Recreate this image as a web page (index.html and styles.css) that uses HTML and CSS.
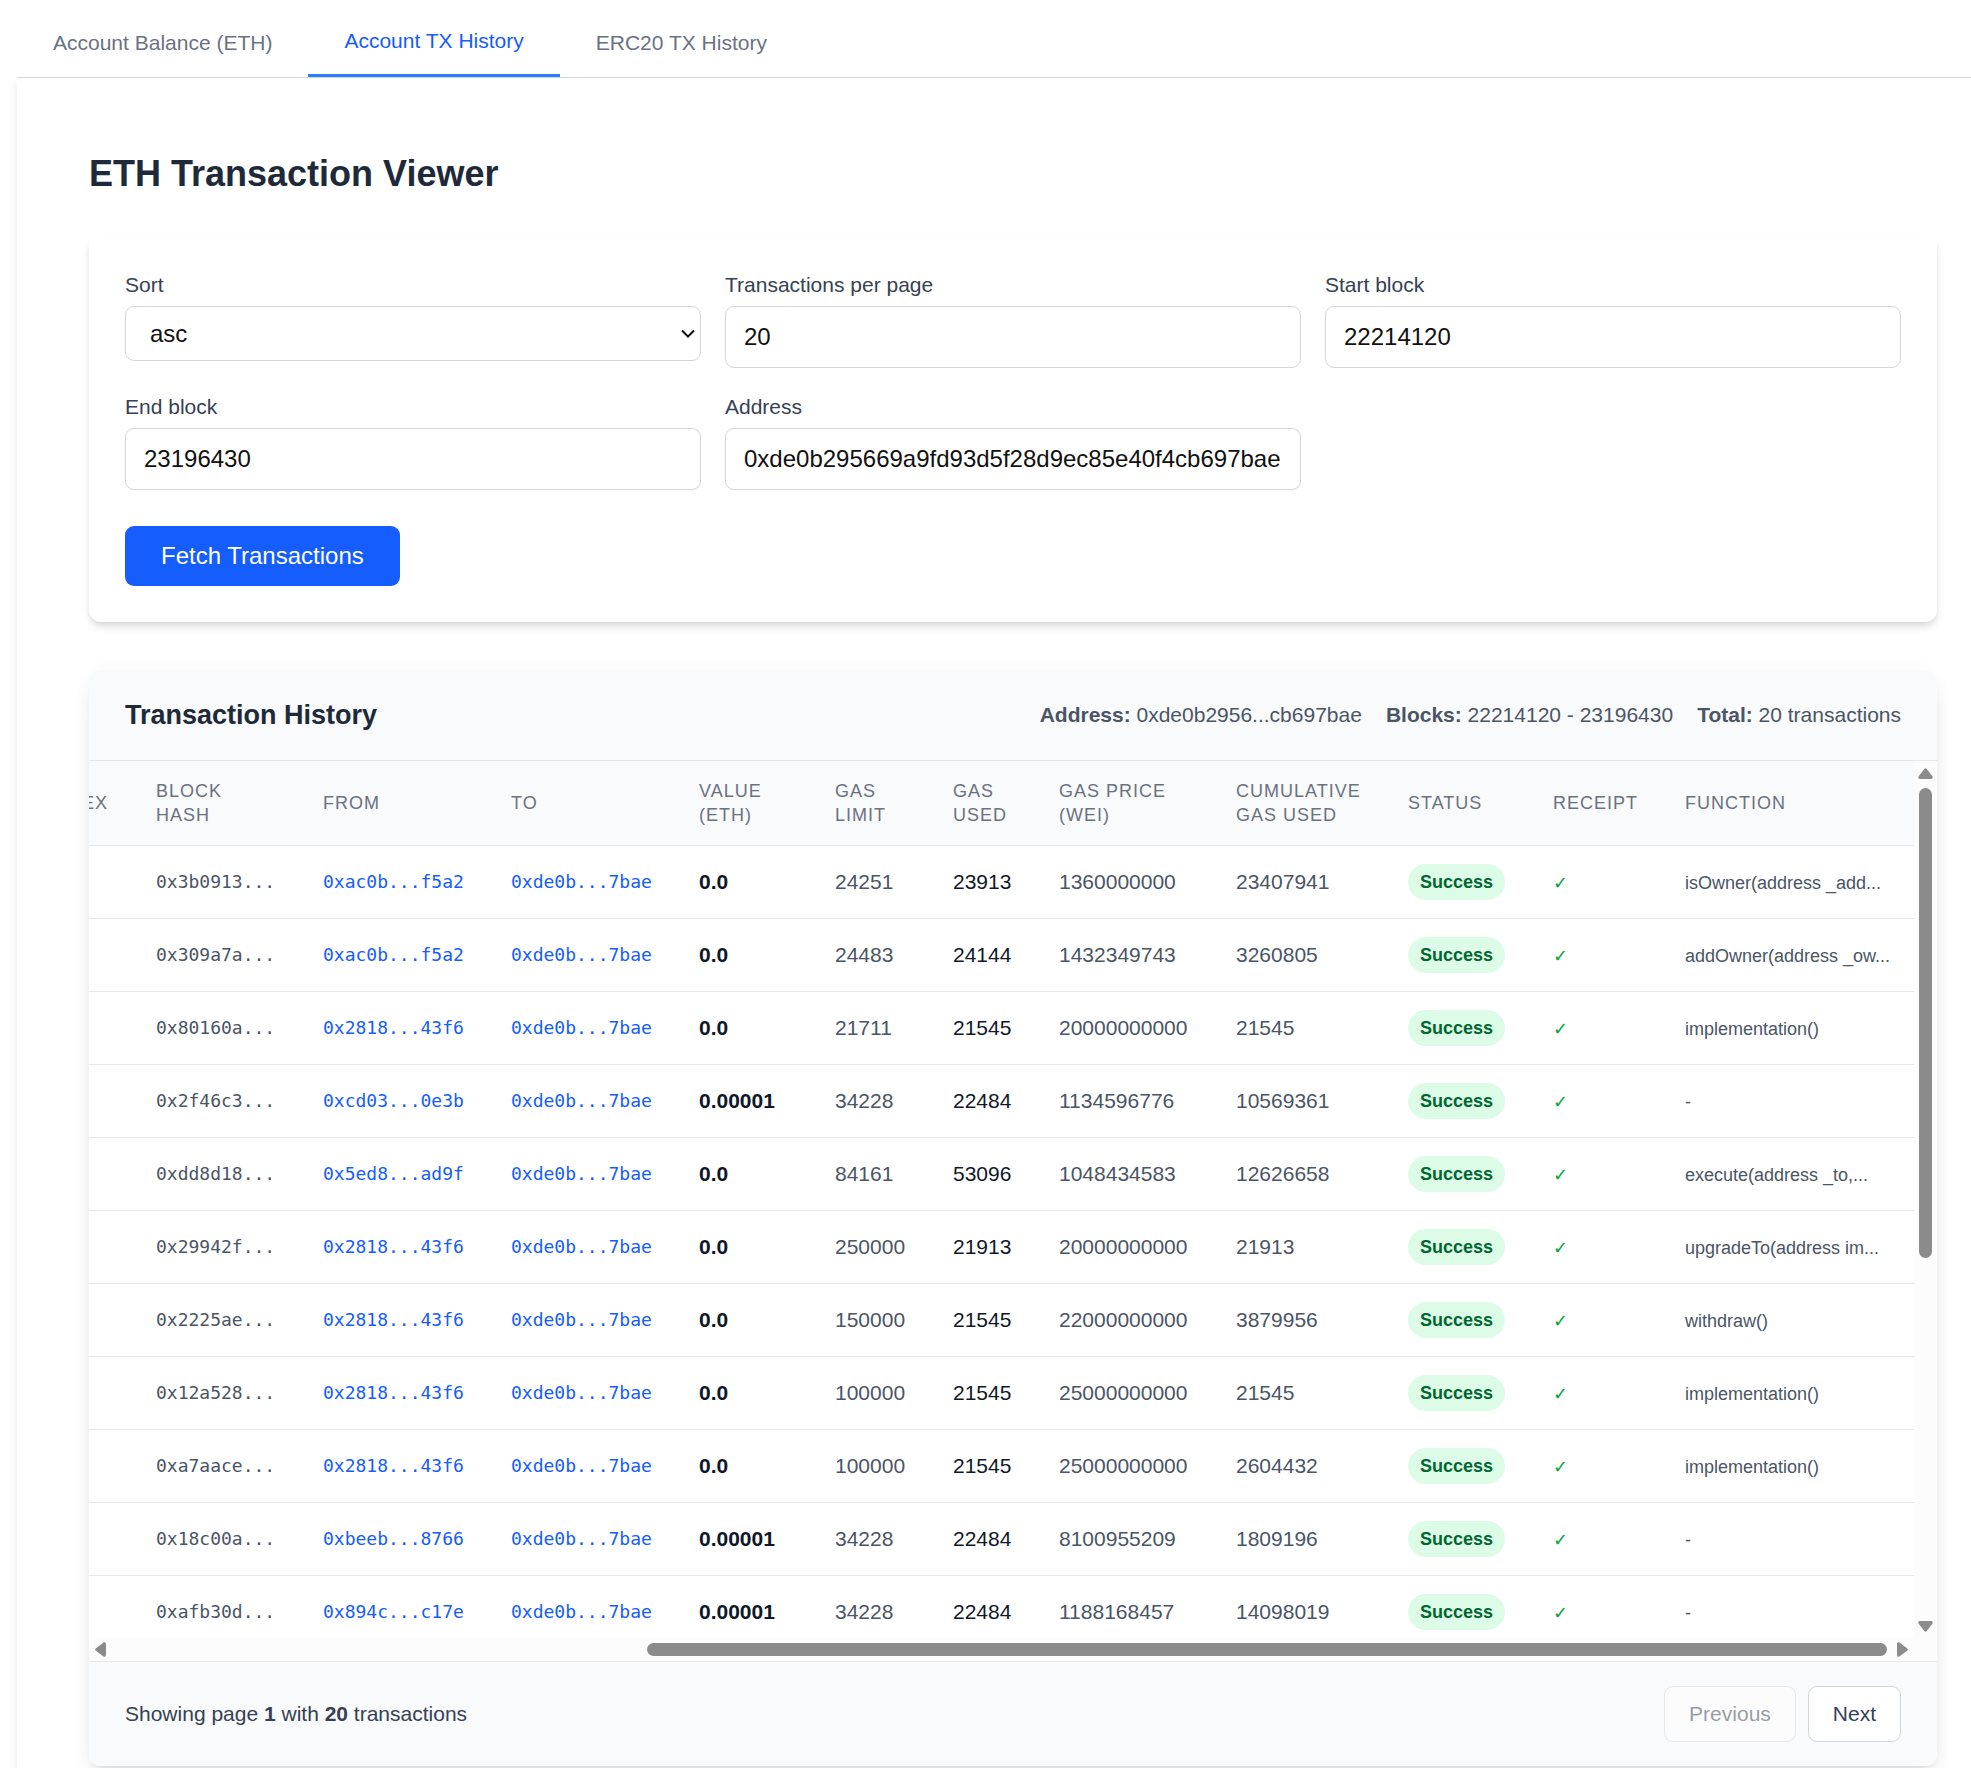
FILE: index.html
```html
<!DOCTYPE html>
<html lang="en">
<head>
<meta charset="utf-8">
<title>ETH Transaction Viewer</title>
<link rel="stylesheet" href="styles.css">
</head>
<body>
<nav class="tabs">
  <button type="button" class="tab">Account Balance (ETH)</button>
  <button type="button" class="tab tab-active">Account TX History</button>
  <button type="button" class="tab">ERC20 TX History</button>
</nav>
<main class="panel">
  <h1 class="page-title">ETH Transaction Viewer</h1>

  <form class="card filters">
    <div class="fields">
      <div class="field">
        <label for="sort">Sort</label>
        <div class="select-wrap">
          <select id="sort" class="control select"><option>asc</option><option>desc</option></select>
          <svg class="chevron" viewBox="0 0 14 10" aria-hidden="true"><path d="M1 1.5 7 7.5 13 1.5"/></svg>
        </div>
      </div>
      <div class="field">
        <label for="per-page">Transactions per page</label>
        <input id="per-page" class="control" type="text" value="20">
      </div>
      <div class="field">
        <label for="start">Start block</label>
        <input id="start" class="control" type="text" value="22214120">
      </div>
      <div class="field">
        <label for="end">End block</label>
        <input id="end" class="control" type="text" value="23196430">
      </div>
      <div class="field">
        <label for="address">Address</label>
        <input id="address" class="control" type="text" value="0xde0b295669a9fd93d5f28d9ec85e40f4cb697bae">
      </div>
    </div>
    <button type="button" class="fetch">Fetch Transactions</button>
  </form>

  <section class="card history">
    <header class="history-head">
      <h2 class="history-title">Transaction History</h2>
      <div class="meta">
        <span><strong>Address:</strong> 0xde0b2956...cb697bae</span>
        <span><strong>Blocks:</strong> 22214120 - 23196430</span>
        <span><strong>Total:</strong> 20 transactions</span>
      </div>
    </header>

    <div class="scroller">
      <div class="viewport">
        <table class="tx">
          <colgroup>
            <col class="c-index"><col class="c-hash"><col class="c-addr"><col class="c-addr"><col class="c-value"><col class="c-limit"><col class="c-used"><col class="c-price"><col class="c-cumulative"><col class="c-status"><col class="c-receipt"><col class="c-function">
          </colgroup>
          <thead>
            <tr><th>Index</th><th>Block Hash</th><th>From</th><th>To</th><th>Value (ETH)</th><th>Gas Limit</th><th>Gas Used</th><th>Gas Price (Wei)</th><th>Cumulative Gas Used</th><th>Status</th><th>Receipt</th><th>Function</th></tr>
          </thead>
          <tbody>
            <tr><td></td><td class="mono">0x3b0913...</td><td class="mono"><a href="#">0xac0b...f5a2</a></td><td class="mono"><a href="#">0xde0b...7bae</a></td><td class="value">0.0</td><td>24251</td><td class="used">23913</td><td>1360000000</td><td>23407941</td><td><span class="badge">Success</span></td><td class="check">✓</td><td class="fn">isOwner(address _add...</td></tr>
            <tr><td></td><td class="mono">0x309a7a...</td><td class="mono"><a href="#">0xac0b...f5a2</a></td><td class="mono"><a href="#">0xde0b...7bae</a></td><td class="value">0.0</td><td>24483</td><td class="used">24144</td><td>1432349743</td><td>3260805</td><td><span class="badge">Success</span></td><td class="check">✓</td><td class="fn">addOwner(address _ow...</td></tr>
            <tr><td></td><td class="mono">0x80160a...</td><td class="mono"><a href="#">0x2818...43f6</a></td><td class="mono"><a href="#">0xde0b...7bae</a></td><td class="value">0.0</td><td>21711</td><td class="used">21545</td><td>20000000000</td><td>21545</td><td><span class="badge">Success</span></td><td class="check">✓</td><td class="fn">implementation()</td></tr>
            <tr><td></td><td class="mono">0x2f46c3...</td><td class="mono"><a href="#">0xcd03...0e3b</a></td><td class="mono"><a href="#">0xde0b...7bae</a></td><td class="value">0.00001</td><td>34228</td><td class="used">22484</td><td>1134596776</td><td>10569361</td><td><span class="badge">Success</span></td><td class="check">✓</td><td class="fn">-</td></tr>
            <tr><td></td><td class="mono">0xdd8d18...</td><td class="mono"><a href="#">0x5ed8...ad9f</a></td><td class="mono"><a href="#">0xde0b...7bae</a></td><td class="value">0.0</td><td>84161</td><td class="used">53096</td><td>1048434583</td><td>12626658</td><td><span class="badge">Success</span></td><td class="check">✓</td><td class="fn">execute(address _to,...</td></tr>
            <tr><td></td><td class="mono">0x29942f...</td><td class="mono"><a href="#">0x2818...43f6</a></td><td class="mono"><a href="#">0xde0b...7bae</a></td><td class="value">0.0</td><td>250000</td><td class="used">21913</td><td>20000000000</td><td>21913</td><td><span class="badge">Success</span></td><td class="check">✓</td><td class="fn">upgradeTo(address im...</td></tr>
            <tr><td></td><td class="mono">0x2225ae...</td><td class="mono"><a href="#">0x2818...43f6</a></td><td class="mono"><a href="#">0xde0b...7bae</a></td><td class="value">0.0</td><td>150000</td><td class="used">21545</td><td>22000000000</td><td>3879956</td><td><span class="badge">Success</span></td><td class="check">✓</td><td class="fn">withdraw()</td></tr>
            <tr><td></td><td class="mono">0x12a528...</td><td class="mono"><a href="#">0x2818...43f6</a></td><td class="mono"><a href="#">0xde0b...7bae</a></td><td class="value">0.0</td><td>100000</td><td class="used">21545</td><td>25000000000</td><td>21545</td><td><span class="badge">Success</span></td><td class="check">✓</td><td class="fn">implementation()</td></tr>
            <tr><td></td><td class="mono">0xa7aace...</td><td class="mono"><a href="#">0x2818...43f6</a></td><td class="mono"><a href="#">0xde0b...7bae</a></td><td class="value">0.0</td><td>100000</td><td class="used">21545</td><td>25000000000</td><td>2604432</td><td><span class="badge">Success</span></td><td class="check">✓</td><td class="fn">implementation()</td></tr>
            <tr><td></td><td class="mono">0x18c00a...</td><td class="mono"><a href="#">0xbeeb...8766</a></td><td class="mono"><a href="#">0xde0b...7bae</a></td><td class="value">0.00001</td><td>34228</td><td class="used">22484</td><td>8100955209</td><td>1809196</td><td><span class="badge">Success</span></td><td class="check">✓</td><td class="fn">-</td></tr>
            <tr><td></td><td class="mono">0xafb30d...</td><td class="mono"><a href="#">0x894c...c17e</a></td><td class="mono"><a href="#">0xde0b...7bae</a></td><td class="value">0.00001</td><td>34228</td><td class="used">22484</td><td>1188168457</td><td>14098019</td><td><span class="badge">Success</span></td><td class="check">✓</td><td class="fn">-</td></tr>
          </tbody>
        </table>
      </div>
      <div class="bar bar-v" aria-hidden="true">
        <svg class="arrow-v" viewBox="0 0 15 11"><path d="M6.200 1Q7.500-.6 8.800 1L14.500 8.500Q15.300 11 13 11H2Q-.3 11 .5 8.500Z"/></svg>
        <div class="track-v"><div class="thumb"></div></div>
        <svg class="arrow-v" viewBox="0 0 15 11"><path d="M6.200 10Q7.500 11.600 8.800 10L14.500 2.500Q15.300 0 13 0H2Q-.3 0 .5 2.500Z"/></svg>
      </div>
      <div class="bar bar-h" aria-hidden="true">
        <svg class="arrow-h" viewBox="0 0 11 15"><path d="M1 6.200Q-.6 7.500 1 8.800L8.500 14.500Q11 15.300 11 13V2Q11-.3 8.500.5Z"/></svg>
        <div class="track-h"><div class="thumb"></div></div>
        <svg class="arrow-h" viewBox="0 0 11 15"><path d="M10 6.200Q11.600 7.500 10 8.800L2.500 14.500Q0 15.300 0 13V2Q0-.3 2.500.5Z"/></svg>
      </div>
      <div class="corner"></div>
    </div>

    <footer class="history-foot">
      <p class="showing">Showing page <strong>1</strong> with <strong>20</strong> transactions</p>
      <div class="pager">
        <button type="button" class="page-btn" disabled>Previous</button>
        <button type="button" class="page-btn">Next</button>
      </div>
    </footer>
  </section>
</main>
</body>
</html>
```
FILE: styles.css
```css
*, *::before, *::after { box-sizing: border-box; }

body {
  margin: 0;
  padding-left: 17px;
  min-height: 100vh;
  display: flex;
  flex-direction: column;
  overflow-x: hidden;
  background: #fff;
  color: #111;
  font-family: "Liberation Sans", Arial, sans-serif;
  font-size: 21px;
  line-height: 30px;
}

h1, h2, p { margin: 0; }
button, input, select { font: inherit; }

/* Tabs */
.tabs { display: flex; border-bottom: 1px solid #d1d5dc; }
.tab {
  height: 77px;
  padding: 8px 36px 0;
  border: 0;
  background: none;
  color: #6a7282;
}
.tab-active { border-bottom: 3px solid #2b7fff; color: #155dfc; }

/* Panel */
.panel {
  flex: 1;
  padding: 72px 34px 0 72px;
  box-shadow: 0 4px 9px rgba(0, 0, 0, .1);
  clip-path: inset(0 0 0 -17px);
}
.page-title {
  margin-bottom: 36px;
  color: #1e2939;
  font-size: 36px;
  line-height: 48px;
}
.card { border-radius: 12px; background: #fff; }

/* Filters */
.filters {
  margin-bottom: 48px;
  padding: 36px;
  box-shadow: 0 6px 9px -1px rgba(0, 0, 0, .1), 0 3px 6px -2px rgba(0, 0, 0, .1);
}
.fields {
  display: grid;
  grid-template-columns: repeat(3, 1fr);
  align-items: start;
  gap: 24px;
  margin-bottom: 36px;
}
.field { display: flex; flex-direction: column; gap: 6px; color: #364153; }
.control {
  width: 100%;
  height: 62px;
  padding: 0 18px;
  border: 1px solid #d1d5dc;
  border-radius: 9px;
  background: #fff;
  color: #111;
  font-size: 24px;
}
.select-wrap { position: relative; display: flex; }
.select { height: 55px; padding: 0 24px; appearance: none; }
.chevron {
  position: absolute;
  right: 6px;
  top: 23px;
  width: 14px;
  height: 10px;
  fill: none;
  stroke: #111;
  stroke-width: 2;
  pointer-events: none;
}
.fetch {
  align-self: flex-start;
  display: block;
  height: 60px;
  padding: 0 36px;
  border: 0;
  border-radius: 9px;
  background: #155dfc;
  color: #fff;
  font-size: 24px;
}

/* History */
.history {
  overflow: hidden;
  box-shadow: 0 15px 23px -5px rgba(0, 0, 0, .1), 0 6px 9px -6px rgba(0, 0, 0, .1), 0 0 18px rgba(0, 0, 0, .03);
}
.history-head {
  display: flex;
  align-items: center;
  justify-content: space-between;
  gap: 24px;
  padding: 24px 36px;
  border-bottom: 1px solid #e5e7eb;
  background: #f9fafb;
}
.history-title { color: #1e2939; font-size: 27px; line-height: 42px; }
.meta { display: flex; gap: 24px; color: #4a5565; }

.scroller {
  display: grid;
  grid-template: minmax(0, 1fr) 23px / minmax(0, 1fr) 23px;
  height: 900px;
}
/* Content is anchored to its right end, as when scrolled fully across */
.viewport { display: flex; justify-content: flex-end; align-items: flex-start; overflow: hidden; }

.tx {
  flex: none;
  width: 1900px;
  table-layout: fixed;
  border-collapse: separate;
  border-spacing: 0;
  color: #4a5565;
}
.c-index { width: 118px; }
.c-hash { width: 167px; }
.c-addr { width: 188px; }
.c-value { width: 136px; }
.c-limit { width: 118px; }
.c-used { width: 106px; }
.c-price { width: 177px; }
.c-cumulative { width: 172px; }
.c-status { width: 145px; }
.c-receipt { width: 132px; }
.c-function { width: 253px; }
.tx th {
  padding: 18px 24px;
  border-bottom: 1px solid #e5e7eb;
  background: #f9fafb;
  color: #6a7282;
  font-size: 18px;
  font-weight: 400;
  line-height: 24px;
  letter-spacing: 1px;
  text-align: left;
  text-transform: uppercase;
}
.tx td {
  height: 73px;
  padding: 0 24px;
  border-bottom: 1px solid #e5e7eb;
  white-space: nowrap;
}
.tx th:first-child { text-align: right; }
.tx .mono { font-family: "DejaVu Sans Mono", "Courier New", monospace; font-size: 18px; }
.tx .value { color: #101828; font-weight: 700; }
.tx .used { color: #101828; }
.tx .check { color: #00a63e; }
.tx .check, .tx .fn { padding-top: 2px; font-size: 18px; }
.tx a { color: #155dfc; text-decoration: none; }
.badge {
  display: inline-block;
  padding: 6px 12px;
  border-radius: 18px;
  background: #dcfce7;
  color: #016630;
  font-size: 18px;
  font-weight: 700;
  line-height: 24px;
  vertical-align: middle;
}

/* Scroll bars */
.bar { display: flex; align-items: center; justify-content: space-between; background: #fcfcfc; fill: #8b8b8b; }
.bar-v { flex-direction: column; padding: 7px 0 6px; }
.bar-h { padding: 0 6px; }
.arrow-v { width: 15px; height: 11px; }
.arrow-h { width: 11px; height: 15px; }
.track-v { flex: 1; width: 13px; margin: 9px 0; }
.track-h { flex: 1; display: flex; justify-content: flex-end; height: 13px; margin: 0 10px; }
.thumb { border-radius: 7px; background: #8b8b8b; }
.track-v .thumb { height: 57%; }
.track-h .thumb { width: 70%; }
.corner { background: #fcfcfc; }

.history-foot {
  display: flex;
  align-items: center;
  justify-content: space-between;
  padding: 24px 36px;
  border-top: 1px solid #e5e7eb;
  background: #f9fafb;
  color: #364153;
}
.pager { display: flex; gap: 12px; }
.page-btn {
  height: 56px;
  padding: 0 24px;
  border: 1px solid #d1d5dc;
  border-radius: 9px;
  background: #fff;
  color: #364153;
}
.page-btn:disabled { opacity: .5; }
```
